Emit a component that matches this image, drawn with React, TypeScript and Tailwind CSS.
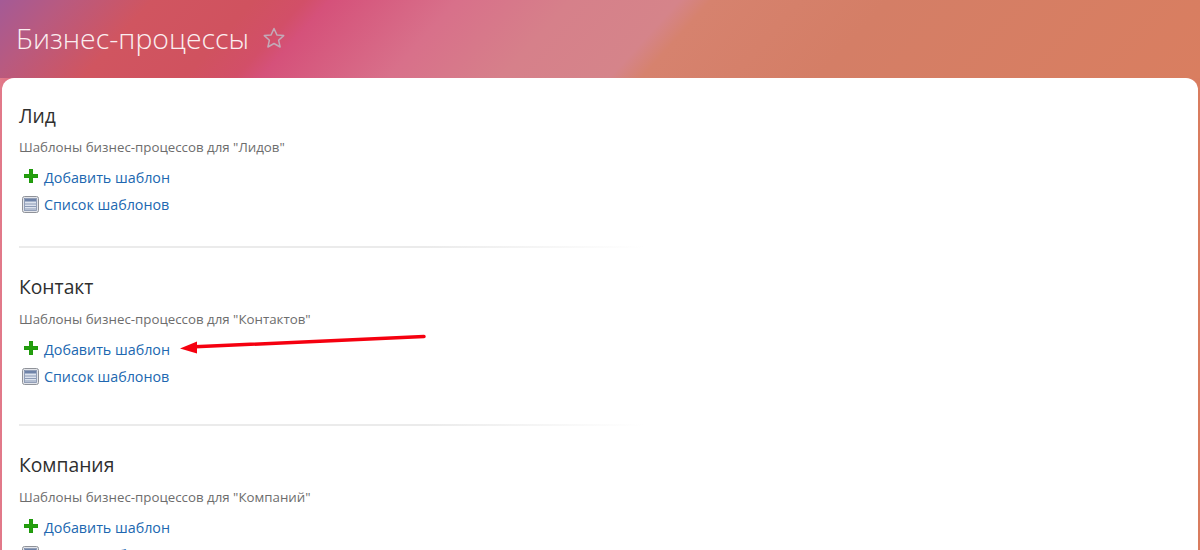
const font = { fontFamily: '"Open Sans", "Noto Sans", sans-serif' }

function PlusIcon() {
  return (
    <svg width="14" height="14" viewBox="0 0 14 14" className="block">
      <path d="M5 0h4v5h5v4H9v5H5V9H0V5h5z" fill="#1f9a0c" />
      <path d="M6 1h2v5h5v2H8v5H6V8H1V6h5z" fill="#259f0e" />
    </svg>
  )
}

function ListIcon() {
  return (
    <svg width="17" height="17" viewBox="0 0 17 17" className="block">
      <rect x="0.5" y="0.5" width="16" height="16" rx="2" fill="#e3e5ea" stroke="#8f9299" />
      <rect x="2.5" y="2.5" width="12" height="12" fill="#dde3ee" stroke="#7f8eab" strokeWidth="0.8" />
      <rect x="3" y="3" width="11" height="2.5" fill="#6f83a8" />
      <path d="M3 8h11M3 10.5h11M3 13h11" stroke="#8b9ab5" strokeWidth="1" />
    </svg>
  )
}

function Section({
  title,
  hint,
  hintClass,
  addClass,
  dividerClass,
}: {
  title: string
  hint: string
  hintClass: string
  addClass: string
  dividerClass?: string
}) {
  return (
    <section>
      <h2 className="text-[19.3px] leading-[24px] text-[#2f2f2f]">{title}</h2>
      <p className={`${hintClass} text-[13.3px] leading-[16px] text-[#6d6d6d]`}>{hint}</p>
      <div className={`${addClass} flex h-[27px] items-center text-[14.3px] text-[#2067b0]`}>
        <span className="flex w-[25px] -translate-y-[2px] justify-start pl-[5px]"><PlusIcon /></span>
        <a>Добавить шаблон</a>
      </div>
      <div className="flex h-[27px] items-center text-[14.3px] text-[#2067b0]">
        <span className="flex w-[25px] justify-start pl-[3px]"><ListIcon /></span>
        <a>Список шаблонов</a>
      </div>
      {dividerClass && (
        <div className={`${dividerClass} h-[2px] w-[625px] bg-gradient-to-r from-[#ebebeb] from-65% to-white`} />
      )}
    </section>
  )
}

export default function App() {
  return (
    <div
      className="h-[550px] w-[1200px] overflow-hidden bg-[linear-gradient(90deg,#e27a8a_0%,#d8607a_2%,#d8806c_98%,#d97c5e_100%)]"
      style={font}
    >
      <header className="flex h-[78px] items-center gap-[13px] bg-[linear-gradient(132deg,#a45a96_0%,#b85a80_5%,#d05560_12%,#d0525f_20%,#d24f68_24%,#d5517a_26%,#d8708a_36%,#d6808a_45%,#d5848a_53.5%,#d6826e_56%,#d47e66_70%,#d97e60_100%)] pb-[3px] pl-[16px]">
        <h1 className="text-[28.4px] font-light leading-[36px] text-[#fbeef0]">Бизнес-процессы</h1>
        <svg width="24" height="24" viewBox="0 0 24 24" fill="none" stroke="#c3aab8" strokeWidth="1.5" strokeLinejoin="round">
          <path d="M12 2.5l2.9 6.4 6.8.7-5.1 4.6 1.5 6.8-6.1-3.5-6.1 3.5 1.5-6.8-5.1-4.6 6.8-.7z" />
        </svg>
      </header>
      <main className="relative mx-[2px] h-[472px] overflow-hidden rounded-t-[12px] bg-white pl-[17px] pt-[26px]">
        <Section
          title="Лид"
          hint='Шаблоны бизнес-процессов для "Лидов"'
          hintClass="mt-[11px]"
          addClass="mt-[9px]"
          dividerClass="mt-[28px] mb-[27px]"
        />
        <Section
          title="Контакт"
          hint='Шаблоны бизнес-процессов для "Контактов"'
          hintClass="mt-[12px]"
          addClass="mt-[9px]"
          dividerClass="mt-[34px] mb-[27px]"
        />
        <Section
          title="Компания"
          hint='Шаблоны бизнес-процессов для "Компаний"'
          hintClass="mt-[12px]"
          addClass="mt-[9px]"
        />
        <svg className="absolute left-[178px] top-[253px]" width="250" height="26" viewBox="0 0 250 26">
          <path d="M244 5.5L15 15.8" stroke="#f5000f" strokeWidth="3.5" strokeLinecap="round" />
          <path d="M0 17.5L17 10.5V22.5z" fill="#f5000f" />
        </svg>
      </main>
    </div>
  )
}
